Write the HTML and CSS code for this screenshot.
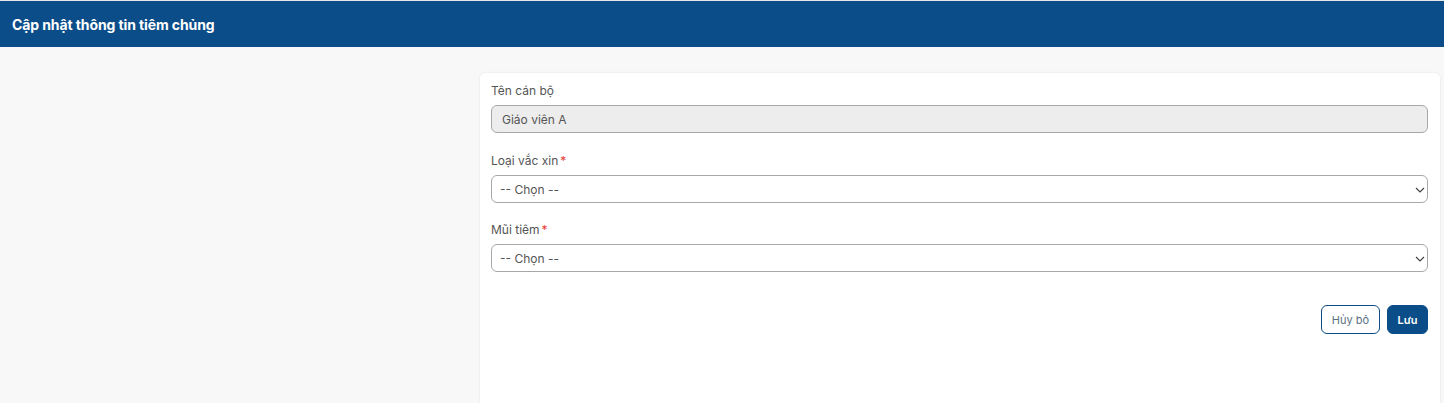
FILE: index.html
```html
<!DOCTYPE html>
<html lang="vi">
<head>
<meta charset="utf-8">
<title>Cập nhật thông tin tiêm chủng</title>
<link rel="stylesheet" href="styles.css">
</head>
<body>
<header class="topbar">
  <h1 class="topbar-title">Cập nhật thông tin tiêm chủng</h1>
</header>
<main class="page">
  <div class="spacer"></div>
  <section class="card">
    <div class="form-group first">
      <label class="form-label">Tên cán bộ</label>
      <input class="form-control readonly" type="text" value="Giáo viên A" readonly>
    </div>
    <div class="form-group">
      <label class="form-label">Loại vắc xin<span class="req">*</span></label>
      <div class="select-wrap">
        <select class="form-control form-select"><option>-- Chọn --</option></select>
        <svg class="chev" width="10" height="6" viewBox="0 0 10 6"><path d="M1 1l4 4 4-4" fill="none" stroke="#444" stroke-width="1.2"/></svg>
      </div>
    </div>
    <div class="form-group">
      <label class="form-label">Mũi tiêm<span class="req">*</span></label>
      <div class="select-wrap">
        <select class="form-control form-select"><option>-- Chọn --</option></select>
        <svg class="chev" width="10" height="6" viewBox="0 0 10 6"><path d="M1 1l4 4 4-4" fill="none" stroke="#444" stroke-width="1.2"/></svg>
      </div>
    </div>
    <div class="actions">
      <button class="btn btn-outline" type="button">Hủy bỏ</button>
      <button class="btn btn-primary" type="button">Lưu</button>
    </div>
  </section>
</main>
</body>
</html>
```
FILE: styles.css
```css
* { box-sizing: border-box; }
html, body { margin: 0; padding: 0; height: 100%; }
body {
  background: #f8f8f8;
  font-family: Inter, "Noto Sans", sans-serif;
  color: #555;
  overflow: hidden;
  border-top: 1px solid #e6e6e6;
}
.topbar {
  background: #0b4d89;
  height: 46px;
  display: flex;
  align-items: center;
  padding: 0 12px;
}
.topbar-title {
  margin: 0;
  color: #fff;
  font-size: 14px;
  font-weight: 700;
  letter-spacing: -0.1px;
}
.page {
  display: flex;
  padding-top: 26px;
  padding-right: 4px;
  height: calc(100% - 46px);
}
.spacer { width: 480px; flex: none; }
.card {
  flex: 1;
  background: #fff;
  border-radius: 5px 5px 0 0;
  box-shadow: 0 0 3px rgba(0,0,0,0.08);
  padding: 10px 12px 0 11px;
}
.form-group { margin-bottom: 19px; }
.form-group.first { margin-bottom: 20px; }
.form-label {
  display: block;
  font-size: 12px;
  line-height: 16px;
  margin-bottom: 6px;
  color: #555;
}
.req { color: #e53935; margin-left: 2px; }
.form-control {
  display: block;
  width: 100%;
  height: 28px;
  border: 1px solid #a8a8a8;
  border-radius: 6px;
  font-family: inherit;
  font-size: 12px;
  color: #555;
  padding: 0 10px;
  background: #fff;
  outline: none;
}
.readonly { background: #ededed; padding-left: 10px; }
.select-wrap { position: relative; margin-top: 2px; }
.form-select {
  appearance: none;
  -webkit-appearance: none;
  padding-left: 8px;
}
.chev { position: absolute; right: 3px; top: 12px; }
.actions {
  display: flex;
  justify-content: flex-end;
  gap: 7px;
  margin-top: 33px;
}
.btn {
  height: 29px;
  border-radius: 6px;
  font-family: inherit;
  font-size: 11px;
  padding: 0;
  white-space: nowrap;
  cursor: pointer;
}
.btn-outline {
  width: 59px;
  background: #fff;
  border: 1px solid #0b4d89;
  color: #5a6f82;
}
.btn-primary {
  width: 41px;
  background: #0b4d89;
  border: 1px solid #0b4d89;
  color: #fff;
  font-weight: 600;
}
```
